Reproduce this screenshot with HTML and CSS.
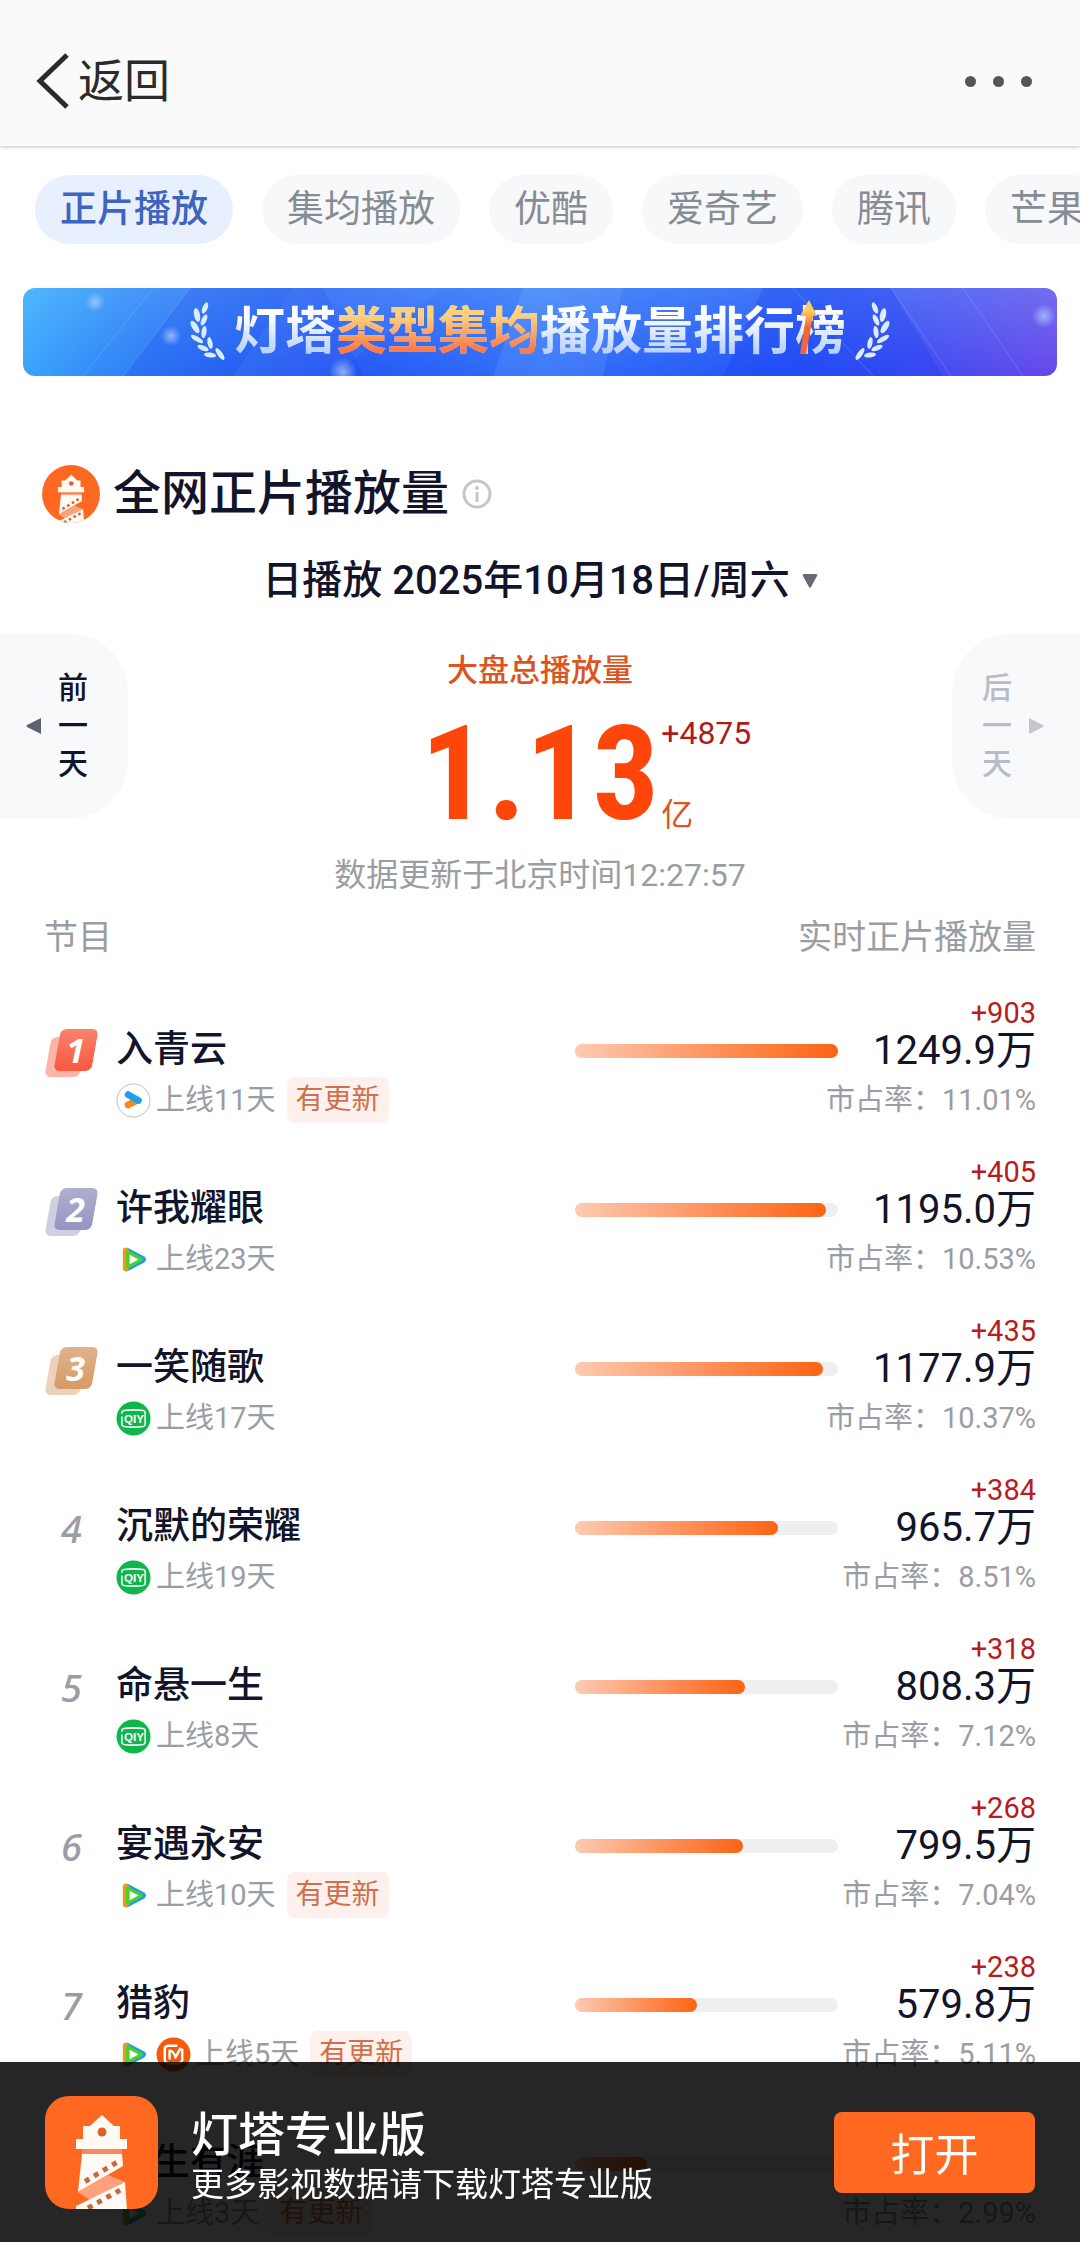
FILE: index.html
```
<!DOCTYPE html>
<html lang="zh-CN">
<head>
    <meta charset="UTF-8">
    <meta name="viewport" content="width=device-width, initial-scale=1.0">
    <title>灯塔专业版</title>
    <link rel="stylesheet" href="styles.css">
</head>
<body>
    <!-- icons -->
    <svg class="defs" width="0" height="0" aria-hidden="true">
        <linearGradient id="arrowFill" x1="0" y1="0" x2="0" y2="1">
            <stop offset="0.2" stop-color="#ffcf5c"/>
            <stop offset="0.5" stop-color="#f4672c"/>
        </linearGradient>
        <radialGradient id="glow">
            <stop offset="0" stop-color="#b8d4ff" stop-opacity="0.7"/>
            <stop offset="1" stop-color="#b8d4ff" stop-opacity="0"/>
        </radialGradient>
        <symbol id="lighthouse" viewBox="0 0 113 113">
            <rect width="113" height="113" fill="#ff6820"/>
            <path fill="#f58a5c" d="M37 53h40v5H37z"/>
            <path fill="#fffaf4" d="M57 19l12 11h6v13h7v10H31V43h7V30h7z"/>
            <circle cx="57" cy="36" r="4.5" fill="#e0602c"/>
            <path fill="#fffaf4" d="M37 58h40l1 12-45 26z"/>
            <path fill="#ffa27c" d="M33 96l30-17 17 7-35 18z"/>
            <path fill="#fffaf4" d="M80 86l2 28H31v-4z"/>
            <path stroke="#c8673a" stroke-width="5" stroke-dasharray="5 5.6" d="M40 85.500l34-20.500M43 112l35-19.500"/>
        </symbol>
        <symbol id="youku" viewBox="0 0 36 36">
            <circle cx="18" cy="18" r="17" fill="#fff" stroke="#b9bcc4"/>
            <path d="M12.500 22.500l9-4.500" stroke="#f08a1c" stroke-width="7" stroke-linecap="round"/>
            <path d="M12.500 12l10.500 6" stroke="#1fa0ea" stroke-width="7" stroke-linecap="round"/>
        </symbol>
        <symbol id="tencent" viewBox="0 0 36 36">
            <path d="M8 9q0-4 4-3l17 9q4 3 0 6l-17 9q-4 1-4-3z" fill="#1e9ee0"/>
            <path d="M7 9q0-3 3-3l3 1v22l-3 1q-3 0-3-3z" fill="#f29a16"/>
            <path d="M10 11q0-3 3-2l13 7q3 2 0 4l-13 7q-3 1-3-2z" fill="#4fcf2e"/>
            <path d="M14 13l9 5-9 5z" fill="#fff"/>
        </symbol>
        <symbol id="iqiyi" viewBox="0 0 36 36">
            <circle cx="18" cy="18" r="17.500" fill="#0fb64c"/>
            <path d="M6 13v-1q0-2 2-2.300 10-1.200 20 0 2 .3 2 2.300v12q0 2-2 2.300-10 1.200-20 0-2-.3-2-2.300v-8" fill="none" stroke="#fff" stroke-width="1.600"/>
            <text x="18.500" y="22.500" text-anchor="middle" class="iqiyi-text">QIY</text>
        </symbol>
        <symbol id="mango" viewBox="0 0 36 36">
            <circle cx="18" cy="18" r="17.500" fill="#f25a0c"/>
            <path d="M21 9h-8q-4 0-4 4v10q0 4 4 4h10q4 0 4-4V13M14 22v-8q4 0 6 7l5-9" fill="none" stroke="#fff" stroke-width="2.500" stroke-linecap="round" stroke-linejoin="round"/>
        </symbol>
        <symbol id="laurel" viewBox="0 0 36 60">
            <g fill="#dcecff">
                <ellipse cx="15" cy="6" rx="2.500" ry="6" transform="rotate(22 15 6)"/>
                <ellipse cx="7" cy="13" rx="3" ry="7" transform="rotate(-12 7 13)"/>
                <ellipse cx="14" cy="18" rx="2.500" ry="6" transform="rotate(25 14 18)"/>
                <ellipse cx="5" cy="25" rx="3" ry="7" transform="rotate(-32 5 25)"/>
                <ellipse cx="14" cy="30" rx="2.500" ry="6" transform="rotate(8 14 30)"/>
                <ellipse cx="7" cy="37" rx="2.500" ry="7" transform="rotate(-58 7 37)"/>
                <ellipse cx="20" cy="41" rx="2.500" ry="6" transform="rotate(-12 20 41)"/>
                <ellipse cx="13" cy="46" rx="2.500" ry="6" transform="rotate(-68 13 46)"/>
                <ellipse cx="20" cy="53" rx="2.500" ry="6" transform="rotate(-84 20 53)"/>
                <ellipse cx="30" cy="52" rx="2.500" ry="7" transform="rotate(-35 30 52)"/>
            </g>
        </symbol>
    </svg>

    <header class="top">
        <a class="back" href="#">
            <svg width="34" height="56" viewBox="0 0 34 56"><path d="M31 2L4 28l27 26" fill="none" stroke="#2b2b2b" stroke-width="5"/></svg>
            返回
        </a>
        <button class="more" aria-label="更多"><i></i><i></i><i></i></button>
    </header>

    <nav class="tabs">
        <button class="tab on">正片播放</button>
        <button class="tab">集均播放</button>
        <button class="tab">优酷</button>
        <button class="tab">爱奇艺</button>
        <button class="tab">腾讯</button>
        <button class="tab">芒果</button>
    </nav>

    <a class="banner" href="#">
        <svg class="rays" viewBox="0 0 1034 88" preserveAspectRatio="none" aria-hidden="true">
            <path d="M167 0L100 88h240L300 0z" fill="#1e3fe8" opacity=".2"/>
            <path d="M270 0L210 88h100L420 0z" fill="#7fb4ff" opacity=".1"/>
            <path d="M500 0l-30 88h110L600 0z" fill="#9cc6ff" opacity=".14"/>
            <path d="M740 0l-40 88h220L868 0z" fill="#1a3cf0" opacity=".3"/>
            <path d="M167 0L100 88M868 0l60 88M940 0l60 88M770 0l80 88M130 0L60 88" stroke="#a9cbff" opacity=".25"/>
            <circle cx="148" cy="48" r="10" fill="url(#glow)"/>
            <circle cx="320" cy="84" r="14" fill="url(#glow)"/>
            <circle cx="1021" cy="28" r="12" fill="url(#glow)"/>
            <circle cx="72" cy="14" r="10" fill="url(#glow)"/>
        </svg>
        <svg class="laurel" width="36" height="60"><use href="#laurel"/></svg>
        <span class="banner-text">灯塔<em>类型集均</em>播放量排行榜</span>
        <svg class="laurel flip" width="36" height="60"><use href="#laurel"/></svg>
        <svg class="arrow" width="18" height="54" viewBox="0 0 18 54"><path d="M10 0l8 16h-4L7 54H1l6-38H1z" fill="url(#arrowFill)"/></svg>
    </a>

    <main>
        <div class="title">
            <svg class="title-logo" width="58" height="58"><use href="#lighthouse"/></svg>
            <h1>全网正片播放量</h1>
            <button class="info" aria-label="说明">
                <svg width="30" height="30" viewBox="0 0 30 30"><circle cx="15" cy="15" r="13" fill="none" stroke="#c4c6ca" stroke-width="3"/><circle cx="15" cy="9" r="2" fill="#c4c6ca"/><path d="M15 13v10" stroke="#c4c6ca" stroke-width="3"/></svg>
            </button>
        </div>
        <button class="date">
            日播放 2025年10月18日/周六
            <svg width="16" height="16" viewBox="0 0 16 16"><path d="M2 1h12q2 0 1 2L9 14q-1 2-2 0L1 3Q0 1 2 1z" fill="#666a72"/></svg>
        </button>

        <section class="total">
            <button class="day prev">
                <svg width="16" height="16" viewBox="0 0 16 16"><path d="M15 0v16L1 9q-1-1 0-2z" fill="#5d636e"/></svg>
                <span>前<br>一<br>天</span>
            </button>
            <div class="sum">
                <p class="sum-label">大盘总播放量</p>
                <div class="sum-line">
                    <strong>1.13</strong>
                    <div class="sum-side"><span class="sum-up">+4875</span><span class="sum-unit">亿</span></div>
                </div>
                <p class="sum-time">数据更新于北京时间12:27:57</p>
            </div>
            <button class="day next" disabled>
                <span>后<br>一<br>天</span>
                <svg width="16" height="16" viewBox="0 0 16 16"><path d="M1 0v16l14-7q1-1 0-2z" fill="#c3c6cc"/></svg>
            </button>
        </section>

        <table class="rank">
            <thead>
                <tr><th>节目</th><th>实时正片播放量</th></tr>
            </thead>
            <tbody>
                <tr>
                    <td class="no"><span class="medal gold">1</span></td>
                    <td class="show">
                        <div class="name">入青云</div>
                        <div class="sub"><svg class="icon"><use href="#youku"/></svg>上线11天<span class="tag">有更新</span></div>
                    </td>
                    <td class="chart"><div class="bar"><div class="fill" style="width:100%"></div></div></td>
                    <td class="nums"><div class="up">+903</div><div class="value">1249.9万</div><div class="share">市占率：11.01%</div></td>
                </tr>
                <tr>
                    <td class="no"><span class="medal silver">2</span></td>
                    <td class="show">
                        <div class="name">许我耀眼</div>
                        <div class="sub"><svg class="icon"><use href="#tencent"/></svg>上线23天</div>
                    </td>
                    <td class="chart"><div class="bar"><div class="fill" style="width:95.6%"></div></div></td>
                    <td class="nums"><div class="up">+405</div><div class="value">1195.0万</div><div class="share">市占率：10.53%</div></td>
                </tr>
                <tr>
                    <td class="no"><span class="medal bronze">3</span></td>
                    <td class="show">
                        <div class="name">一笑随歌</div>
                        <div class="sub"><svg class="icon"><use href="#iqiyi"/></svg>上线17天</div>
                    </td>
                    <td class="chart"><div class="bar"><div class="fill" style="width:94.2%"></div></div></td>
                    <td class="nums"><div class="up">+435</div><div class="value">1177.9万</div><div class="share">市占率：10.37%</div></td>
                </tr>
                <tr>
                    <td class="no">4</td>
                    <td class="show">
                        <div class="name">沉默的荣耀</div>
                        <div class="sub"><svg class="icon"><use href="#iqiyi"/></svg>上线19天</div>
                    </td>
                    <td class="chart"><div class="bar"><div class="fill" style="width:77.3%"></div></div></td>
                    <td class="nums"><div class="up">+384</div><div class="value">965.7万</div><div class="share">市占率：8.51%</div></td>
                </tr>
                <tr>
                    <td class="no">5</td>
                    <td class="show">
                        <div class="name">命悬一生</div>
                        <div class="sub"><svg class="icon"><use href="#iqiyi"/></svg>上线8天</div>
                    </td>
                    <td class="chart"><div class="bar"><div class="fill" style="width:64.7%"></div></div></td>
                    <td class="nums"><div class="up">+318</div><div class="value">808.3万</div><div class="share">市占率：7.12%</div></td>
                </tr>
                <tr>
                    <td class="no">6</td>
                    <td class="show">
                        <div class="name">宴遇永安</div>
                        <div class="sub"><svg class="icon"><use href="#tencent"/></svg>上线10天<span class="tag">有更新</span></div>
                    </td>
                    <td class="chart"><div class="bar"><div class="fill" style="width:64%"></div></div></td>
                    <td class="nums"><div class="up">+268</div><div class="value">799.5万</div><div class="share">市占率：7.04%</div></td>
                </tr>
                <tr>
                    <td class="no">7</td>
                    <td class="show">
                        <div class="name">猎豹</div>
                        <div class="sub"><svg class="icon"><use href="#tencent"/></svg><svg class="icon"><use href="#mango"/></svg>上线5天<span class="tag">有更新</span></div>
                    </td>
                    <td class="chart"><div class="bar"><div class="fill" style="width:46.4%"></div></div></td>
                    <td class="nums"><div class="up">+238</div><div class="value">579.8万</div><div class="share">市占率：5.11%</div></td>
                </tr>
                <tr>
                    <td class="no"></td>
                    <td class="show">
                        <div class="name">余生有涯</div>
                        <div class="sub"><svg class="icon"><use href="#tencent"/></svg>上线3天<span class="tag">有更新</span></div>
                    </td>
                    <td class="chart"><div class="bar"><div class="fill" style="width:27.2%"></div></div></td>
                    <td class="nums"><div class="up"></div><div class="value"></div><div class="share">市占率：2.99%</div></td>
                </tr>
            </tbody>
        </table>
    </main>

    <footer class="download">
        <svg class="app-logo" width="113" height="113"><use href="#lighthouse"/></svg>
        <div class="app-text">
            <strong>灯塔专业版</strong>
            <span>更多影视数据请下载灯塔专业版</span>
        </div>
        <button class="open">打开</button>
    </footer>
</body>
</html>
```
FILE: styles.css
```
* {
    margin: 0;
    padding: 0;
    box-sizing: border-box;
}
html, body {
    height: 100%;
}
body {
    background-color: #fff;
    color: #11142a;
    font-family: Roboto, "Noto Sans CJK SC", sans-serif;
    overflow: hidden;
}
button {
    border: none;
    background: none;
    font-family: inherit;
    color: inherit;
}
a {
    color: inherit;
    text-decoration: none;
}
svg {
    display: block;
    flex-shrink: 0;
}
.defs {
    position: absolute;
}

/* header */
.top {
    display: flex;
    justify-content: space-between;
    align-items: center;
    height: 146px;
    padding: 16px 48px 0 36px;
    background-color: #fafafa;
    box-shadow: 0 1px 3px rgba(0, 0, 0, 0.25);
}
.back {
    display: flex;
    align-items: center;
    gap: 8px;
    font-size: 46px;
    line-height: 60px;
    color: #2b2b2b;
}
.more {
    display: flex;
    gap: 17px;
}
.more i {
    width: 11px;
    height: 11px;
    border-radius: 50%;
    background-color: #555;
}

/* tabs */
.tabs {
    display: flex;
    gap: 29px;
    padding: 29px 0 0 35px;
    overflow: hidden;
}
.tab {
    flex-shrink: 0;
    height: 69px;
    padding: 0 25px;
    border-radius: 35px;
    background-color: #f7f8fa;
    color: #878b94;
    font-size: 37px;
    line-height: 66px;
}
.tab.on {
    background-color: #e8effd;
    color: #3c64c0;
    font-weight: 500;
}

/* banner */
.banner {
    position: relative;
    display: flex;
    justify-content: center;
    align-items: center;
    gap: 8px;
    height: 88px;
    margin: 44px 23px 0;
    border-radius: 12px;
    overflow: hidden;
    background:
        linear-gradient(rgba(120, 190, 255, 0.3), rgba(30, 70, 250, 0.15)),
        linear-gradient(90deg, #3db4fc 0, #2f82f6 12%, #2458f4 30%, #3474f8 50%, #2454f6 75%, #4a4bf0 88%, #7448e8 100%);
}
.rays {
    position: absolute;
    width: 100%;
    height: 100%;
}
.laurel {
    position: relative;
}
.flip {
    transform: scaleX(-1);
}
.banner-text {
    position: relative;
    font-size: 51px;
    line-height: 80px;
    font-weight: 700;
    color: transparent;
    background: linear-gradient(#fff 30%, #a9c6ff 85%);
    -webkit-background-clip: text;
    background-clip: text;
}
.banner-text em {
    font-style: normal;
    background: linear-gradient(#ffcf7a 25%, #ff7a45 80%);
    -webkit-background-clip: text;
    background-clip: text;
}
.arrow {
    position: absolute;
    left: calc(50% + 259px);
    top: 12px;
}

/* title */
.title {
    display: flex;
    align-items: center;
    gap: 13px;
    padding: 89px 42px 0;
}
.title-logo {
    border-radius: 50%;
}
.title h1 {
    font-size: 48px;
    line-height: 58px;
    font-weight: 500;
}
.date {
    display: flex;
    align-items: center;
    gap: 12px;
    margin: 32px auto 0;
    font-size: 40px;
    line-height: 52px;
    font-weight: 500;
}

/* total */
.total {
    display: flex;
    justify-content: space-between;
    align-items: flex-start;
    margin-top: 26px;
}
.day {
    display: flex;
    align-items: center;
    gap: 16px;
    width: 128px;
    height: 186px;
    background-color: #f8f9fb;
    font-size: 30px;
    line-height: 38px;
    font-weight: 500;
}
.prev {
    padding-left: 26px;
    border-radius: 0 60px 60px 0;
}
.next {
    justify-content: flex-end;
    padding-right: 36px;
    border-radius: 60px 0 0 60px;
    color: #b9bcc4;
}
.sum {
    flex: 1;
    text-align: center;
}
.sum-label {
    margin-top: 18px;
    font-size: 31px;
    line-height: 40px;
    font-weight: 500;
    color: #dc5420;
}
.sum-line {
    display: grid;
    grid-template-columns: 1fr auto 1fr;
    gap: 2px;
    margin-top: 26px;
}
.sum-line strong {
    grid-column: 2;
    font-family: "Roboto Condensed", "Liberation Sans Narrow", Roboto, sans-serif;
    font-size: 132px;
    line-height: 114px;
    color: #ff460a;
}
.sum-side {
    display: flex;
    flex-direction: column;
    justify-content: space-between;
    text-align: left;
    font-size: 32px;
    line-height: 32px;
}
.sum-up {
    color: #b01a1a;
}
.sum-unit {
    color: #dc5420;
}
.sum-time {
    margin-top: 24px;
    font-size: 32px;
    line-height: 40px;
    color: #9a9da3;
}

/* ranking */
.rank {
    display: block;
    padding: 20px 44px 0;
}
.rank thead, .rank tbody {
    display: block;
}
.rank thead tr {
    display: flex;
    justify-content: space-between;
    padding-bottom: 38px;
}
.rank th {
    font-size: 34px;
    line-height: 44px;
    font-weight: 400;
    color: #9a9da3;
}
.rank tbody tr {
    display: grid;
    grid-template-columns: 72px 1fr 263px 198px;
    height: 159px;
}
.no {
    padding: 32px 0 0 17px;
    font-family: "Noto Sans", sans-serif;
    font-size: 38px;
    line-height: 44px;
    font-weight: 500;
    font-style: italic;
    color: #9a9da3;
}
.medal {
    position: relative;
    z-index: 0;
    display: block;
    width: 54px;
    height: 48px;
    margin-left: -17px;
    padding-left: 9px;
    text-align: center;
    font-size: 34px;
    line-height: 42px;
    font-weight: 700;
    color: #fff;
}
.medal::before, .medal::after {
    content: "";
    position: absolute;
    z-index: -1;
    border-radius: 6px;
    transform: skewX(-10deg);
    background-color: var(--medal);
}
.medal::before {
    left: 4px;
    bottom: 0;
    width: 35px;
    height: 40px;
    opacity: 0.45;
}
.medal::after {
    right: 3px;
    top: 0;
    width: 38px;
    height: 42px;
    background-image: linear-gradient(rgba(255, 255, 255, 0.25), rgba(255, 255, 255, 0));
}
.gold {
    --medal: #f9593e;
}
.silver {
    --medal: #9494c2;
}
.bronze {
    --medal: #d69a66;
}
.show {
    padding-top: 32px;
    white-space: nowrap;
}
.name {
    font-size: 37px;
    line-height: 42px;
    font-weight: 500;
}
.sub {
    display: flex;
    align-items: center;
    gap: 5px;
    height: 46px;
    margin-top: 6px;
    font-size: 29px;
    line-height: 46px;
    color: #9a9da3;
}
.icon {
    width: 35px;
    height: 35px;
}
.iqiyi-text {
    font: 700 12px "Liberation Sans", sans-serif;
    fill: #fff;
}
.tag {
    margin-left: 6px;
    padding: 0 9px;
    border-radius: 8px;
    background-color: #fef0ec;
    color: #d0704a;
    font-size: 28px;
}
.chart {
    grid-column: 3;
    grid-row: 1;
    padding-top: 47px;
}
.bar {
    height: 14px;
    border-radius: 7px;
    background-color: #eeeff0;
}
.fill {
    height: 14px;
    border-radius: 7px;
    background: linear-gradient(90deg, #fdcbb2, #ff8a50 60%, #fb6414);
}
.nums {
    grid-column: 3 / 5;
    grid-row: 1;
    text-align: right;
    white-space: nowrap;
}
.up {
    height: 32px;
    font-size: 29px;
    line-height: 32px;
    color: #b81c1c;
}
.value {
    height: 44px;
    font-size: 40px;
    line-height: 44px;
}
.share {
    margin-top: 4px;
    font-size: 29px;
    line-height: 46px;
    color: #9a9da3;
}

/* download bar, stays over the list */
.download {
    position: fixed;
    left: 0;
    right: 0;
    bottom: 0;
    display: flex;
    align-items: center;
    gap: 33px;
    height: 180px;
    padding: 0 45px;
    background-color: rgba(0, 0, 0, 0.85);
    color: #fff;
}
.app-logo {
    border-radius: 24px;
}
.app-text {
    display: flex;
    flex-direction: column;
    flex: 1;
    padding-top: 8px;
    font-size: 33px;
    line-height: 42px;
}
.app-text strong {
    font-size: 47px;
    line-height: 58px;
    font-weight: 500;
}
.open {
    width: 201px;
    height: 81px;
    border-radius: 8px;
    background-color: #ff6820;
    font-size: 44px;
}
```
